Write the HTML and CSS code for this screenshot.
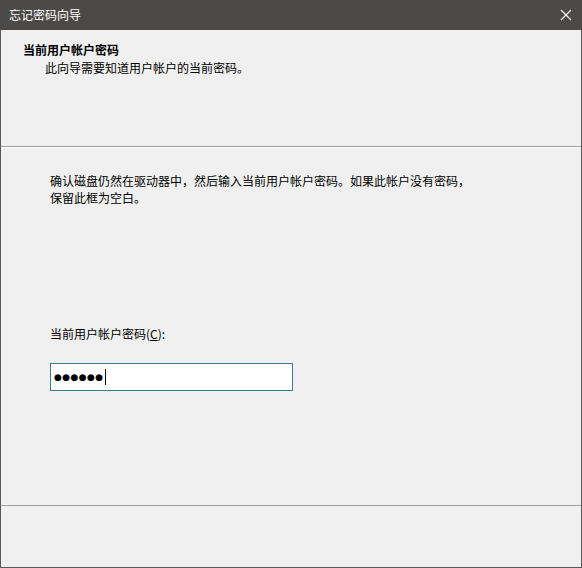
FILE: index.html
```html
<!DOCTYPE html>
<html lang="zh-CN">
<head>
<meta charset="utf-8">
<title>忘记密码向导</title>
<link rel="stylesheet" href="styles.css">
</head>
<body>
<div class="window">
  <div class="titlebar">
    <span class="title">忘记密码向导</span>
    <span class="close">
      <svg width="12" height="12" viewBox="0 0 12 12"><path d="M1 1L11 11M11 1L1 11" stroke="#ffffff" stroke-width="1.2" fill="none"/></svg>
    </span>
  </div>
  <div class="header">
    <div class="h-title">当前用户帐户密码</div>
    <div class="h-sub">此向导需要知道用户帐户的当前密码。</div>
  </div>
  <div class="content">
    <p class="desc">确认磁盘仍然在驱动器中，然后输入当前用户帐户密码。如果此帐户没有密码，<br>保留此框为空白。</p>
    <div class="label">当前用户帐户密码(<u>C</u>):</div>
    <div class="input"><span class="dots">●●●●●●</span><span class="caret"></span></div>
  </div>
  <div class="footer"></div>
</div>
</body>
</html>
```
FILE: styles.css
```css
html, body {
  margin: 0;
  padding: 0;
  background: #f0f0f0;
}
body {
  font-family: "Noto Sans CJK SC", "Microsoft YaHei", sans-serif;
  font-size: 12px;
  color: #000;
}
.window {
  width: 582px;
  height: 568px;
  box-sizing: border-box;
  border: 1px solid #5a5a5a;
  border-top: none;
  display: flex;
  flex-direction: column;
  background: #f0f0f0;
}
.titlebar {
  height: 30px;
  margin: 0 -1px;
  background: #4b4a48;
  color: #ffffff;
  display: flex;
  align-items: center;
  justify-content: space-between;
  padding: 0 10px 0 9px;
  flex-shrink: 0;
}
.title {
  font-size: 12px;
  line-height: 16px;
}
.close {
  display: flex;
  width: 12px;
  height: 12px;
}
.header {
  height: 117px;
  border-bottom: 1px solid #a0a0a0;
  box-shadow: 0 1px 0 #ffffff;
  padding: 11px 0 0 22px;
  box-sizing: border-box;
  flex-shrink: 0;
}
.h-title {
  font-weight: bold;
  line-height: 17px;
}
.h-sub {
  padding-left: 22px;
  line-height: 17px;
  margin-top: 1px;
}
.content {
  flex: 1;
  padding: 25px 0 0 49px;
  border-bottom: 1px solid #a0a0a0;
}
.desc {
  margin: 0;
  line-height: 17px;
}
.label {
  margin-top: 119px;
  line-height: 17px;
}
.input {
  margin-top: 21px;
  width: 243px;
  height: 28px;
  box-sizing: border-box;
  border: 1px solid #3c7c8a;
  background: #ffffff;
  display: flex;
  align-items: center;
  padding-left: 3px;
}
.dots {
  font-family: "DejaVu Sans", sans-serif;
  font-size: 9px;
  letter-spacing: 0.4px;
  line-height: 10px;
}
.caret {
  width: 1px;
  height: 16px;
  background: #000;
  margin-left: 1px;
}
.footer {
  height: 61px;
  flex-shrink: 0;
}
```
